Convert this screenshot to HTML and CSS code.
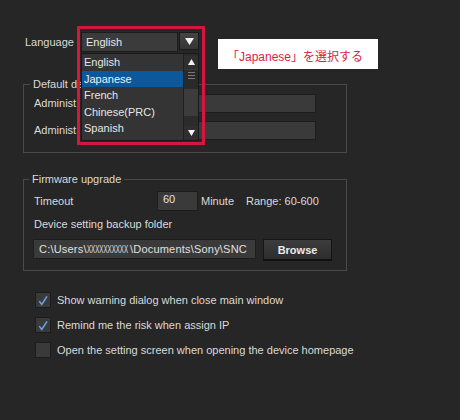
FILE: index.html
```html
<!DOCTYPE html>
<html lang="en">
<head>
<meta charset="utf-8">
<title>Settings</title>
<link rel="stylesheet" href="styles.css">
</head>
<body>
<div class="page">
  <div class="lang-row">
    <span class="lang-lbl">Language</span>
    <div class="combo">
      <div class="combo-field">English</div>
      <div class="combo-btn"><svg width="9" height="7" viewBox="0 0 9 7"><path d="M0 0H9L4.5 7Z" fill="#f2f2f2"/></svg></div>
      <div class="listbox">
        <ul class="items">
          <li>English</li>
          <li class="sel">Japanese</li>
          <li>French</li>
          <li>Chinese(PRC)</li>
          <li>Spanish</li>
        </ul>
        <div class="scroll">
          <div class="sbtn"><svg width="7" height="6" viewBox="0 0 7 6"><path d="M3.5 0L7 6H0Z" fill="#f2f2f2"/></svg></div>
          <div class="thumb"><i></i><i></i><i></i></div>
          <div class="track"></div>
          <div class="spacer"></div>
          <div class="sbtn down"><svg width="7" height="6" viewBox="0 0 7 6"><path d="M0 0H7L3.5 6Z" fill="#f2f2f2"/></svg></div>
        </div>
      </div>
    </div>
  </div>

  <fieldset class="group g1">
    <legend>Default device</legend>
    <div class="frow"><span class="flabel">Administ:</span><div class="field admin"></div></div>
    <div class="frow second"><span class="flabel">Administ:</span><div class="field admin"></div></div>
  </fieldset>

  <fieldset class="group g2">
    <legend>Firmware upgrade</legend>
    <div class="trow">
      <span class="tlabel">Timeout</span>
      <div class="field num">60</div>
      <span class="unit">Minute</span>
      <span class="range">Range: 60-600</span>
    </div>
    <div class="dlabel">Device setting backup folder</div>
    <div class="prow">
      <div class="field path">C:\Users\<span class="mask">XXXXXXXXXX</span>\Documents\Sony\SNC</div>
      <button class="browse" type="button">Browse</button>
    </div>
  </fieldset>

  <div class="checks">
    <label class="chk"><span class="box"><svg width="15" height="15" viewBox="0 0 15 15"><path d="M3.5 8.2L6.2 11.8L11.8 3" fill="none" stroke="#6aa4ee" stroke-width="1.6"/></svg></span>Show warning dialog when close main window</label>
    <label class="chk"><span class="box"><svg width="15" height="15" viewBox="0 0 15 15"><path d="M3.5 8.2L6.2 11.8L11.8 3" fill="none" stroke="#6aa4ee" stroke-width="1.6"/></svg></span>Remind me the risk when assign IP</label>
    <label class="chk"><span class="box"></span>Open the setting screen when opening the device homepage</label>
  </div>

  <div class="highlight"></div>
  <div class="callout">「Japanese」を選択する</div>
</div>
</body>
</html>
```

FILE: styles.css
```css
* { box-sizing: border-box; }
html, body { margin: 0; padding: 0; background: #262626; }
.page {
  position: relative;
  width: 460px;
  height: 420px;
  overflow: hidden;
  padding: 32px 0 0 23px;
  background: #262626;
  color: #dadada;
  font-family: "Liberation Sans", Arial, sans-serif;
  font-size: 11px;
  line-height: 13px;
}

/* language row */
.lang-row { display: flex; align-items: center; height: 20px; margin-left: 2px; }
.lang-lbl { width: 56px; }
.combo { position: relative; display: flex; align-items: flex-start; height: 20px; }
.combo-field {
  width: 97px; height: 20px;
  background: #3b3b3b;
  border: 1px solid #1c1c1c;
  padding: 3px 0 0 4px;
  color: #e8e8e8;
}
.combo-btn {
  width: 20px; height: 18px; margin-left: 1px;
  background: linear-gradient(#444, #353535);
  border: 1px solid #1a1a1a;
  display: flex; align-items: center; justify-content: center;
}
.listbox {
  position: absolute;
  left: 0; top: 21px;
  width: 118px; height: 88px;
  background: #343434;
  border: 1px solid #1a1a1a;
  display: flex;
  z-index: 2;
}
.items { list-style: none; margin: 0; padding: 0; flex: 1; }
.items li { height: 16.5px; line-height: 16.5px; padding-left: 2px; color: #e6e6e6; }
.items li.sel { background: #0b599c; color: #f0f0f0; }
.scroll {
  width: 15px;
  background: #2b2b2b;
  border-left: 1px solid #1f1f1f;
  display: flex; flex-direction: column;
  padding: 2px 0 1px;
}
.sbtn { height: 12px; background: #2f2f2f; display: flex; align-items: center; justify-content: center; }
.sbtn.down { height: 13px; }
.thumb {
  height: 20px; margin-top: 1px;
  background: #2a2a2a;
  border-top: 1px solid #3a3a3a;
  display: flex; flex-direction: column; align-items: center; gap: 2px;
  padding-top: 2px;
}
.thumb i { display: block; width: 7px; height: 1px; background: #7a7a7a; }
.track { height: 27px; background: #3c3c3c; }
.spacer { flex: 1; }

/* group boxes */
.group {
  width: 324px;
  margin: 26px 0 0;
  border: 1px solid #4a4a4a;
  padding: 3px 29px 12px 10px;
  min-width: 0;
}
.group legend { padding: 0 3px; margin-left: -4px; line-height: 13px; color: #dadada; }
.g2 { margin-top: 20px; padding: 5px 12px 9px 10px; }
.g2 legend { margin-left: -5px; }

.field { background: #3a3a3a; border: 1px solid #1d1d1d; color: #e0e0e0; }
.frow { display: flex; align-items: center; height: 19px; }
.frow.second { margin-top: 8px; }
.flabel { width: 48px; }
.field.admin { width: 234px; height: 19px; }

.trow { display: flex; align-items: center; height: 20px; }
.tlabel { width: 123px; }
.field.num { width: 41px; height: 20px; padding: 1px 0 0 5px; align-self: flex-start; }
.unit { margin-left: 3px; width: 45px; }
.dlabel { margin-top: 7px; }
.prow { display: flex; align-items: flex-start; margin-top: 8px; margin-left: -1px; }
.field.path {
  width: 223px; height: 20px;
  padding: 3px 0 0 5px;
  white-space: nowrap; overflow: hidden;
  letter-spacing: 0.2px;
}
.mask { display: inline-block; transform: scaleX(0.56); transform-origin: left; margin-right: -30px; letter-spacing: 0; }
.browse {
  margin-left: 7px;
  width: 69px; height: 22px;
  background: linear-gradient(#3d3d3d, #2d2d2d);
  border: 1px solid #151515;
  border-bottom: 2px solid #111;
  color: #ebebeb;
  font: bold 11px "Liberation Sans", Arial, sans-serif;
  padding: 0;
}

/* checkboxes */
.checks { margin: 21px 0 0 12px; display: flex; flex-direction: column; gap: 9px; }
.chk { display: flex; align-items: center; height: 16px; color: #dadada; }
.box {
  width: 16px; height: 16px; margin-right: 6px;
  background: #3a3a3a;
  border: 1px solid #1c1c1c;
  display: flex; align-items: center; justify-content: center;
}

/* annotation overlays */
.highlight {
  position: absolute;
  left: 77px; top: 26px;
  width: 128px; height: 119px;
  border: 3px solid #d4163c;
  z-index: 3;
}
.callout {
  position: absolute;
  left: 218px; top: 39px;
  width: 160px; height: 30px;
  background: #fff;
  color: #dc1a43;
  font-family: "Liberation Sans", "Noto Sans CJK JP", sans-serif;
  font-size: 12px;
  line-height: 14px;
  padding: 11px 0 0 9px;
  white-space: nowrap;
}
```
